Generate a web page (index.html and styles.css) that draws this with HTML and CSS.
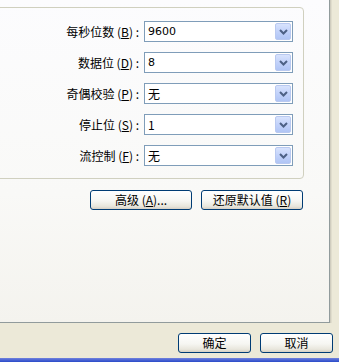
FILE: index.html
```html
<!DOCTYPE html>
<html lang="zh-CN">
<head>
  <meta charset="UTF-8">
  <meta name="viewport" content="width=device-width, initial-scale=1.0">
  <title>端口设置</title>
  <link rel="stylesheet" href="styles.css">
</head>
<body>

<div class="dialog">
  <div class="tab-panel">
    <div class="group">
      <div class="field-grid">
        <label class="field-label">每秒位数 (<u>B</u>) :</label>
        <div class="combo">
          <span class="combo-value latin">9600</span>
          <span class="combo-btn"><svg width="9" height="6" viewBox="0 0 9 6"><polyline points="1,1 4.5,4.5 8,1" fill="none" stroke="#4d6185" stroke-width="2"/></svg></span>
        </div>

        <label class="field-label">数据位 (<u>D</u>) :</label>
        <div class="combo">
          <span class="combo-value latin">8</span>
          <span class="combo-btn"><svg width="9" height="6" viewBox="0 0 9 6"><polyline points="1,1 4.5,4.5 8,1" fill="none" stroke="#4d6185" stroke-width="2"/></svg></span>
        </div>

        <label class="field-label">奇偶校验 (<u>P</u>) :</label>
        <div class="combo">
          <span class="combo-value">无</span>
          <span class="combo-btn"><svg width="9" height="6" viewBox="0 0 9 6"><polyline points="1,1 4.5,4.5 8,1" fill="none" stroke="#4d6185" stroke-width="2"/></svg></span>
        </div>

        <label class="field-label">停止位 (<u>S</u>) :</label>
        <div class="combo">
          <span class="combo-value">1</span>
          <span class="combo-btn"><svg width="9" height="6" viewBox="0 0 9 6"><polyline points="1,1 4.5,4.5 8,1" fill="none" stroke="#4d6185" stroke-width="2"/></svg></span>
        </div>

        <label class="field-label">流控制 (<u>F</u>) :</label>
        <div class="combo">
          <span class="combo-value">无</span>
          <span class="combo-btn"><svg width="9" height="6" viewBox="0 0 9 6"><polyline points="1,1 4.5,4.5 8,1" fill="none" stroke="#4d6185" stroke-width="2"/></svg></span>
        </div>
      </div>
    </div>

    <div class="panel-actions">
      <button class="xp-btn wide">高级 (<u>A</u>)...</button>
      <button class="xp-btn wide">还原默认值 (<u>R</u>)</button>
    </div>
  </div>

  <div class="dialog-actions">
    <button class="xp-btn">确定</button>
    <button class="xp-btn">取消</button>
  </div>

  <div class="frame-bottom"></div>
</div>

</body>
</html>
```

FILE: styles.css
```css
body {
  margin: 0;
  padding: 0;
  font-family: "Noto Sans CJK SC", "Liberation Sans", sans-serif;
  font-size: 12px;
  color: #000;
  background-color: #ece9d8;
}
.dialog {
  width: 339px;
  height: 362px;
  overflow: hidden;
  display: flex;
  flex-direction: column;
  background-color: #ece9d8;
}
.tab-panel {
  box-sizing: border-box;
  width: 330px;
  height: 323px;
  background: linear-gradient(to bottom, #fcfcfe 0%, #f9f9f7 60%, #f4f3ee 100%);
  border-right: 1px solid #919b9c;
  border-bottom: 1px solid #919b9c;
  box-shadow: 1px 0 0 #d0cdbf, 2px 0 0 #e0ddcd;
}
.group {
  box-sizing: border-box;
  width: 316px;
  margin: 7px 0 0 -12px;
  padding: 13px 10px 12px 0;
  border: 1px solid #d0d0bf;
  border-radius: 4px;
}
.field-grid {
  display: grid;
  grid-template-columns: 1fr 149px;
  column-gap: 5px;
  row-gap: 10px;
  align-items: center;
}
.field-label {
  text-align: right;
  line-height: 14px;
  white-space: nowrap;
}
.field-label u, .xp-btn u {
  text-decoration: underline;
}
.combo {
  box-sizing: border-box;
  height: 21px;
  display: flex;
  align-items: center;
  border: 1px solid #7f9db9;
  background: #fff;
  padding: 1px;
}
.combo-value {
  flex: 1;
  padding-left: 2px;
  line-height: 17px;
}
.combo-value.latin {
  font-family: "DejaVu Sans", "Liberation Sans", sans-serif;
  font-size: 11px;
}
.combo-btn {
  box-sizing: border-box;
  width: 16px;
  height: 17px;
  display: flex;
  align-items: center;
  justify-content: center;
  border: 1px solid #b9c9f0;
  border-radius: 2px;
  background: linear-gradient(to bottom, #d8e3fd 0%, #c2d2fa 50%, #b0c5f5 100%);
}
.panel-actions {
  display: flex;
  justify-content: flex-end;
  gap: 9px;
  margin-top: 11px;
  padding-right: 26px;
}
.xp-btn {
  box-sizing: border-box;
  width: 73px;
  height: 20px;
  padding: 0;
  font-family: "Noto Sans CJK SC", "Liberation Sans", sans-serif;
  font-size: 12px;
  line-height: 16px;
  color: #000;
  border: 1px solid #003c74;
  border-radius: 3px;
  background: linear-gradient(to bottom, #ffffff 0%, #f6f6f2 55%, #e8e6dc 85%, #d6d0c5 100%);
  cursor: pointer;
}
.xp-btn.wide {
  width: 102px;
}
.dialog-actions {
  display: flex;
  justify-content: flex-end;
  gap: 9px;
  padding: 10px 6px 0 0;
  height: 20px;
}
.frame-bottom {
  margin-top: 5px;
  height: 4px;
  background: linear-gradient(to bottom, #7384dc 0%, #4a63d4 50%, #2a4bc8 100%);
}
```
